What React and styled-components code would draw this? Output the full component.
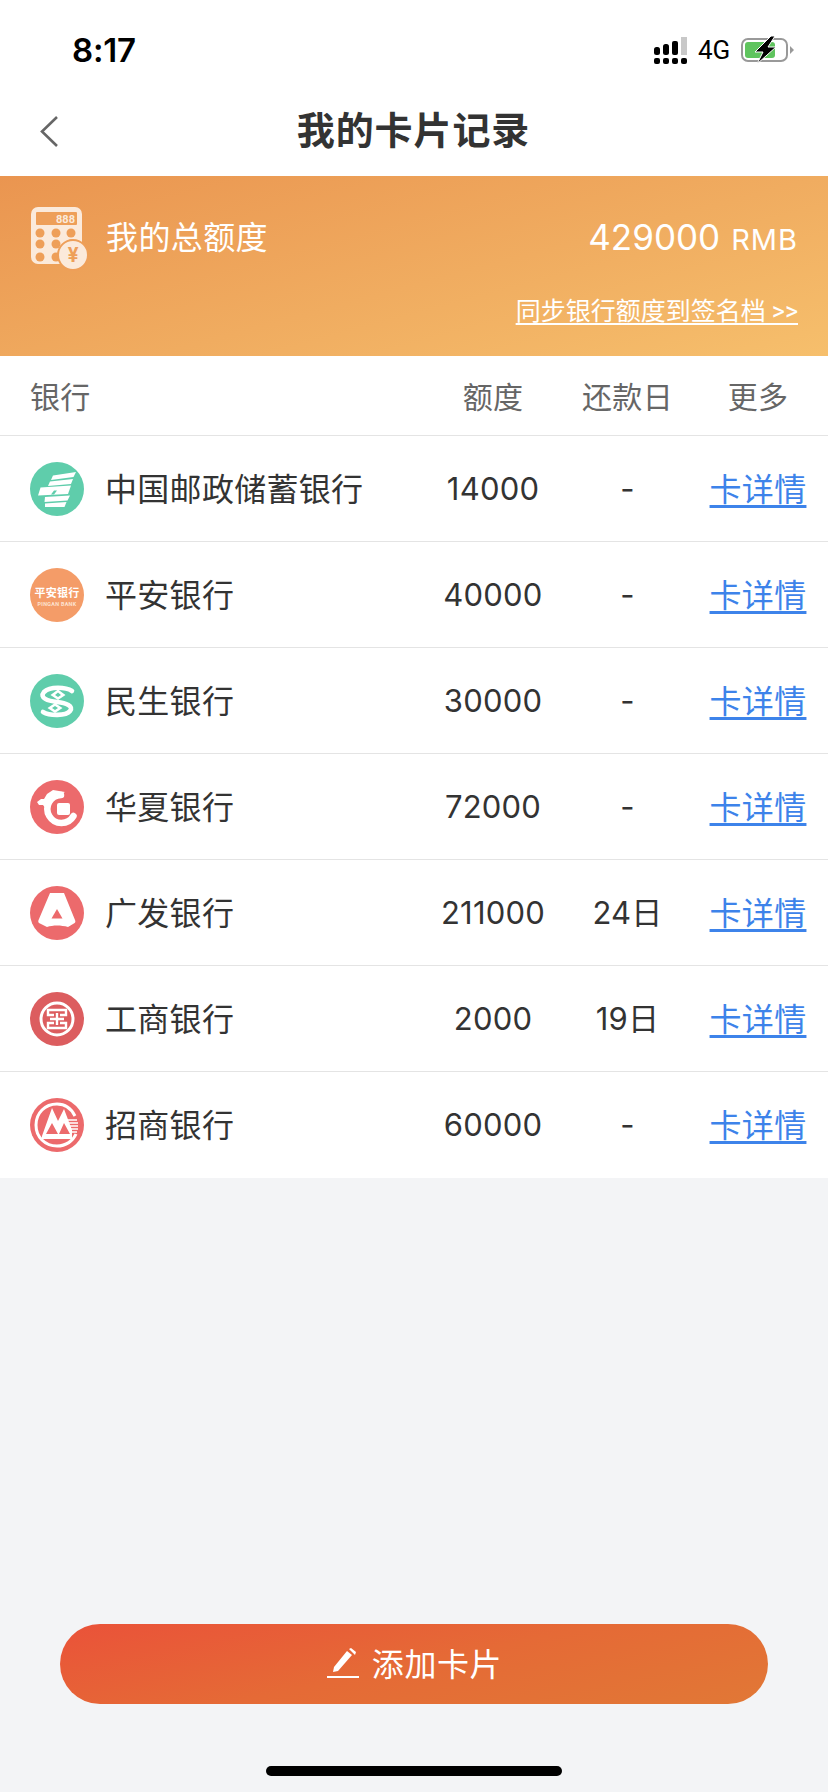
import styled, { createGlobalStyle } from "styled-components";

const GlobalStyle = createGlobalStyle`
html, body {
  margin: 0;
  padding: 0;
  background: #f3f4f6;
}
* {
  box-sizing: border-box;
}
`;

const Page = styled.div`
width: 828px;
height: 1792px;
display: flex;
flex-direction: column;
background: #f3f4f6;
font-family: Roboto, "Noto Sans CJK SC", sans-serif;
color: #333333;
overflow: hidden;
`;

const StatusBar = styled.div`
height: 76px;
flex: none;
background: #ffffff;
display: flex;
align-items: center;
justify-content: space-between;
padding: 24px 33px 0 72px;
color: #000000;
`;
const Time = styled.span`
font-family: Inter, sans-serif;
font-size: 33px;
font-weight: 600;
line-height: 40px;
letter-spacing: -0.2px;
`;
const StatusRight = styled.div`
display: flex;
align-items: center;
gap: 11px;
`;
const Net = styled.span`
font-family: Roboto, sans-serif;
font-size: 26px;
line-height: 30px;
width: 32px;
`;

const NavBar = styled.div`
height: 100px;
flex: none;
background: #ffffff;
position: relative;
display: flex;
align-items: center;
justify-content: center;
padding: 10px 1px 0 0;
`;
const BackIcon = styled.svg`
position: absolute;
left: 38px;
top: 38px;
`;
const Title = styled.h1`
margin: 0;
font-size: 38px;
font-weight: 700;
line-height: 50px;
letter-spacing: 0.9px;
color: #333333;
`;

const Banner = styled.div`
height: 180px;
flex: none;
padding: 30px 30px 0 30px;
background: linear-gradient(165deg, #ea9550 0%, #f0ac60 55%, #f6bf6c 100%);
color: #ffffff;
`;
const BannerTop = styled.div`
display: flex;
align-items: center;
height: 64px;
`;
const BannerLabel = styled.span`
margin-left: 18px;
font-size: 32px;
line-height: 44px;
letter-spacing: 0.4px;
`;
const BannerTotal = styled.span`
margin-left: auto;
font-family: Inter, sans-serif;
font-size: 35px;
line-height: 44px;
`;
const Unit = styled.span`
margin-left: 11px;
font-size: 29px;
letter-spacing: 1px;
`;
const SyncRow = styled.div`
display: flex;
justify-content: flex-end;
margin-top: 25px;
`;
const SyncLink = styled.a`
font-size: 25px;
line-height: 34px;
color: #ffffff;
text-decoration: underline;
text-underline-offset: 3px;
`;

const Grid = styled.div`
display: grid;
grid-template-columns: 393px 140px 129px 132px;
padding: 0 4px 0 30px;
align-items: center;
background: #ffffff;
border-bottom: 1px solid #e4e4e4;
`;
const HeadRow = styled(Grid)`
height: 80px;
flex: none;
padding-bottom: 2px;
color: #666666;
font-size: 30px;
`;
const Row = styled(Grid)`
height: 106px;
flex: none;
&:last-of-type {
  border-bottom: 0;
}
`;
const HeadCell = styled.div`
text-align: ${(p) => (p.$left ? "left" : "center")};
letter-spacing: 0.3px;
`;
const BankCell = styled.div`
display: flex;
align-items: center;
gap: 21px;
font-size: 32px;
letter-spacing: 0.3px;
`;
const BankName = styled.span`
padding-bottom: 4px;
`;
const NumCell = styled.div`
text-align: center;
font-family: Inter, "Noto Sans CJK SC", sans-serif;
font-size: 31px;
line-height: 40px;
letter-spacing: 0.2px;
`;
const DetailLink = styled.a`
justify-self: center;
padding-bottom: 4px;
font-size: 32px;
letter-spacing: 0.3px;
color: #3d83ea;
text-decoration: underline;
text-underline-offset: 4px;
`;

const Footer = styled.div`
margin-top: auto;
padding: 0 60px 16px;
display: flex;
flex-direction: column;
align-items: center;
`;
const AddButton = styled.button`
width: 100%;
height: 80px;
border: 0;
border-radius: 40px;
display: flex;
align-items: center;
justify-content: center;
gap: 12px;
background: linear-gradient(168deg, #ea5239 0%, #e56a36 50%, #e17836 100%);
color: #ffffff;
font-family: inherit;
font-size: 32px;
letter-spacing: 0.6px;
`;
const AddLabel = styled.span`
padding-bottom: 4px;
`;
const HomeBar = styled.div`
width: 296px;
height: 10px;
margin-top: 62px;
border-radius: 5px;
background: #000000;
`;

const Signal = () => (
  <svg width="33" height="27" viewBox="0 0 33 27">
    <rect x="0" y="10" width="6" height="8" rx="2.5" fill="#000" />
    <rect x="9" y="7" width="6" height="11" rx="2.5" fill="#000" />
    <rect x="18" y="4" width="6" height="14" rx="2" fill="#000" />
    <rect x="27" y="0" width="6" height="18" fill="#c8c8c8" />
    <rect x="0" y="21" width="6" height="6" rx="2" fill="#000" />
    <rect x="9" y="21" width="6" height="6" rx="2" fill="#000" />
    <rect x="18" y="21" width="6" height="6" rx="2" fill="#000" />
    <rect x="27" y="21" width="6" height="6" rx="2" fill="#000" />
  </svg>
);

const Battery = () => (
  <svg width="54" height="28" viewBox="0 0 54 28">
    <rect x="1" y="3" width="45" height="22" rx="6" fill="#fff" stroke="#999" strokeWidth="2" />
    <rect x="4" y="6" width="30" height="16" rx="3" fill="#5fc45e" />
    <path d="M49 10l4 4-4 4z" fill="#999" />
    <path d="M30 0L14 16h8l-6 12 19-17h-8l7-11z" fill="#000" stroke="#fff" strokeWidth="1" />
  </svg>
);

const Calculator = () => (
  <svg width="58" height="66" viewBox="0 0 58 66">
    <rect x="1" y="2" width="51" height="57" rx="7" fill="#fbeadb" />
    <rect x="6" y="7" width="41" height="13" rx="1" fill="#ee9f59" />
    <text x="45" y="18" textAnchor="end" fontSize="11" fontWeight="700" fontFamily="Roboto, sans-serif" fill="#fbeadb">888</text>
    {[10, 26, 41].map((x) =>
      [28, 39, 52].map((y) => <circle key={x + "-" + y} cx={x} cy={y} r="4.5" fill="#ee9f59" />)
    )}
    <circle cx="43" cy="50" r="15" fill="#fbeadb" stroke="#ee9f59" strokeWidth="2" />
    <text x="43" y="57" textAnchor="middle" fontSize="20" fontWeight="700" fontFamily="Roboto, sans-serif" fill="#ee9f59">¥</text>
  </svg>
);

const LogoCircle = ({ color, children }) => (
  <svg width="54" height="54" viewBox="0 0 54 54" style={{ flex: "none" }}>
    <circle cx="27" cy="27" r="27" fill={color} />
    {children}
  </svg>
);

const logos = {
  psbc: (
    <LogoCircle color="#5fcdab">
      <path d="M23 13.5L46 10l-2.5 5L21 18z" fill="#fff" />
      <path d="M20 19.5L43 17l-2 5-23 2z" fill="#fff" />
      <path d="M10.5 25.5L41 23.5 38 32 8 33.5z" fill="#fff" />
      <path d="M15 35l25-1.5-2.5 5L14.5 40z" fill="#fff" />
      <path d="M15 41.5l21.5-1.5-2 5H15z" fill="#fff" />
      <path d="M24 28.5l-3 4h3l3-4z" fill="#5fcdab" />
    </LogoCircle>
  ),
  pingan: (
    <LogoCircle color="#f49c68">
      <text x="27" y="29" textAnchor="middle" fontSize="11" fontWeight="700" fill="#fff" fontFamily="'Noto Sans CJK SC', sans-serif">平安银行</text>
      <text x="27" y="38" textAnchor="middle" fontSize="5.4" fontWeight="700" fill="#fde3d2" fontFamily="Roboto, sans-serif">PINGAN BANK</text>
    </LogoCircle>
  ),
  cmbc: (
    <LogoCircle color="#5fcdab">
      <path
        d="M42 17C36 13 20 12 14 18c-5 6 4 9 13 10 9 1 17 4 13 9-4 5-20 5-27 1"
        fill="none"
        stroke="#fff"
        strokeWidth="4.6"
        strokeLinecap="round"
      />
      <path d="M28 15.5l7.5 5.5-7.5 5-7.5-5zM25 29l7.5 5-7.5 5-7.5-5z" fill="#fff" />
      <path d="M28 18.5l3 2.5-3 2-3-2zM25 32l3 2-3 2-3-2z" fill="#5fcdab" />
    </LogoCircle>
  ),
  hxb: (
    <LogoCircle color="#ec6a6c">
      <path d="M43.5 36A14 14 0 1 1 31 15" fill="none" stroke="#fff" strokeWidth="6.5" strokeLinecap="round" />
      <path d="M7 22l4-3 3 0 3-5 6-4 6 1 6 1-5 3-7 3-4 5-3 6-3-4-4 0z" fill="#fff" />
      <rect x="27" y="23" width="13" height="12" rx="2" fill="#fff" />
    </LogoCircle>
  ),
  cgb: (
    <LogoCircle color="#ec6a6c">
      <path d="M20 7h14l11 27c1 2 0 3-2 4l-5 3c-7-2-15-2-21 0l-8-4c-1-1-1-2 0-4z" fill="#fff" />
      <path d="M27 23l5.5 9.5H21.5z" fill="#ec6a6c" />
    </LogoCircle>
  ),
  icbc: (
    <LogoCircle color="#dc5d5f">
      <circle cx="27" cy="27" r="16" fill="none" stroke="#fff" strokeWidth="3" />
      <path
        d="M24 23h-6v-5h18v5h-6M20 27h14M27 21v12M24 31h-6v5h18v-5h-6"
        fill="none"
        stroke="#fff"
        strokeWidth="2.4"
      />
    </LogoCircle>
  ),
  cmb: (
    <LogoCircle color="#ec6a6c">
      <path d="M45 18C41 10 34 6 27 6 15 6 6 15 6 27s9 21 21 21c9 0 16-5 19-12" fill="none" stroke="#fff" strokeWidth="3" />
      <path d="M12 38l10-28 6 13 6-12 8 21v9H12zM22 25l-6 11h12zM34 25l-5 11h11z" fill="#fff" fillRule="evenodd" />
      <path d="M37 22h10M38 25h10M39 28h9M40 31h8M41 34h6" stroke="#fff" strokeWidth="1.5" />
    </LogoCircle>
  ),
};

const banks = [
  { key: "psbc", name: "中国邮政储蓄银行", limit: "14000", due: "-" },
  { key: "pingan", name: "平安银行", limit: "40000", due: "-" },
  { key: "cmbc", name: "民生银行", limit: "30000", due: "-" },
  { key: "hxb", name: "华夏银行", limit: "72000", due: "-" },
  { key: "cgb", name: "广发银行", limit: "211000", due: "24日" },
  { key: "icbc", name: "工商银行", limit: "2000", due: "19日" },
  { key: "cmb", name: "招商银行", limit: "60000", due: "-" },
];

export default function App() {
  return (
    <Page>
      <GlobalStyle />
      <StatusBar>
        <Time>8:17</Time>
        <StatusRight>
          <Signal />
          <Net>4G</Net>
          <Battery />
        </StatusRight>
      </StatusBar>
      <NavBar>
        <BackIcon width="22" height="34" viewBox="0 0 22 34">
          <path d="M19 3L4 17.5 19 32" fill="none" stroke="#666" strokeWidth="2.6" />
        </BackIcon>
        <Title>我的卡片记录</Title>
      </NavBar>
      <Banner>
        <BannerTop>
          <Calculator />
          <BannerLabel>我的总额度</BannerLabel>
          <BannerTotal>
            429000<Unit>RMB</Unit>
          </BannerTotal>
        </BannerTop>
        <SyncRow>
          <SyncLink>同步银行额度到签名档 &gt;&gt;</SyncLink>
        </SyncRow>
      </Banner>
      <HeadRow>
        <HeadCell $left>银行</HeadCell>
        <HeadCell>额度</HeadCell>
        <HeadCell>还款日</HeadCell>
        <HeadCell>更多</HeadCell>
      </HeadRow>
      <div>
        {banks.map((b) => (
          <Row key={b.key}>
            <BankCell>
              {logos[b.key]}
              <BankName>{b.name}</BankName>
            </BankCell>
            <NumCell>{b.limit}</NumCell>
            <NumCell>{b.due}</NumCell>
            <DetailLink>卡详情</DetailLink>
          </Row>
        ))}
      </div>
      <Footer>
        <AddButton>
          <svg width="34" height="32" viewBox="0 0 34 32">
            <path d="M7 24l1-5L21 3l5 4L12 23z" fill="#fff" />
            <path d="M23 1l2-1 5 4-1 3z" fill="#fff" />
            <rect x="1" y="28" width="32" height="2" fill="#fff" />
          </svg>
          <AddLabel>添加卡片</AddLabel>
        </AddButton>
        <HomeBar />
      </Footer>
    </Page>
  );
}
